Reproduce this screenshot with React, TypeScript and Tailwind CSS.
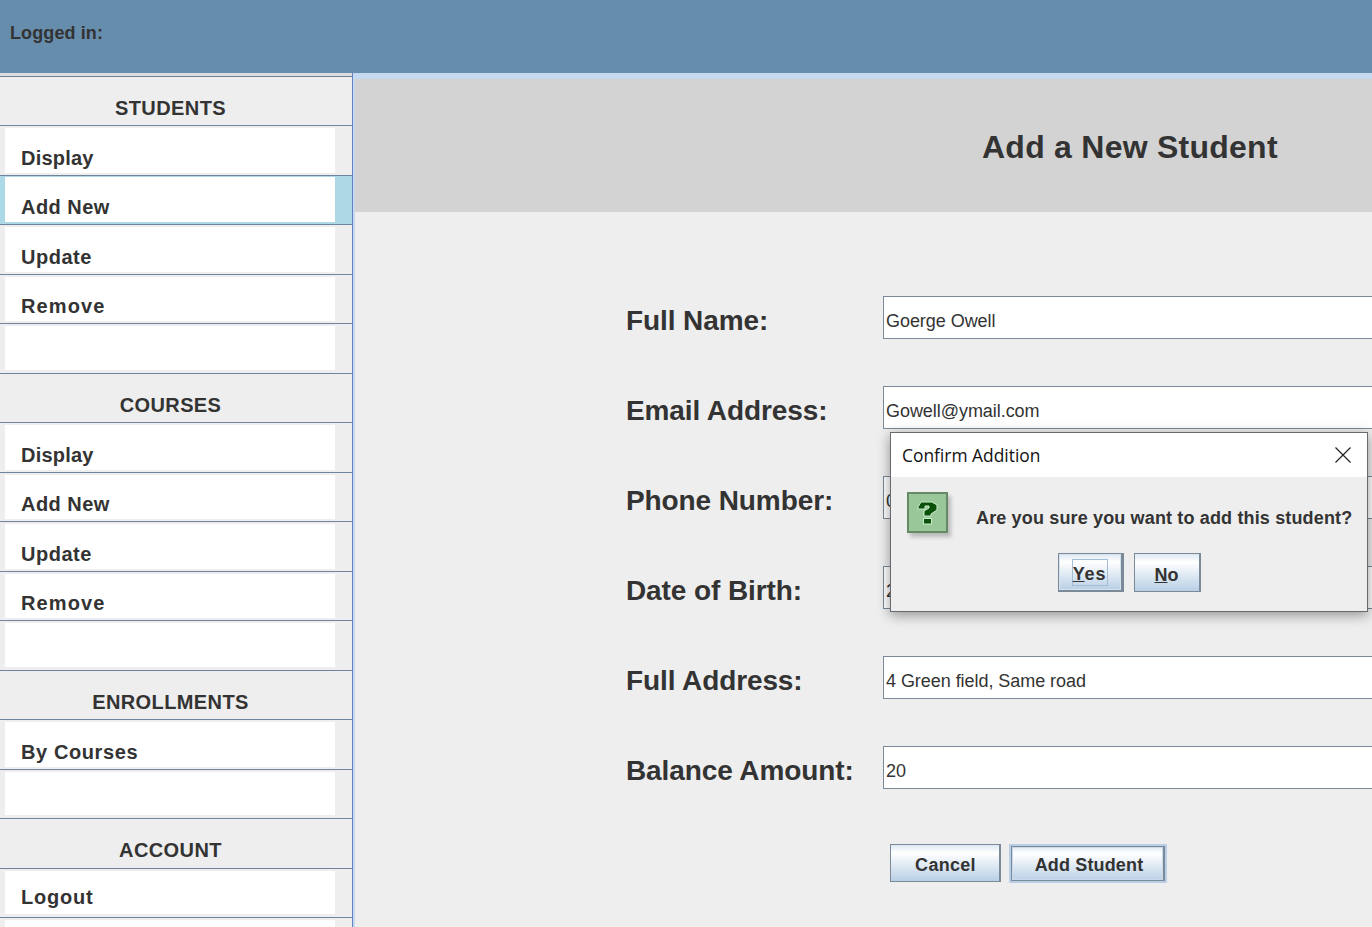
const sidebarRows = [
  { label: 'STUDENTS', kind: 'head', track: '' },
  { label: 'Display', kind: 'item', track: 'tracking-[0.2px]' },
  { label: 'Add New', kind: 'active', track: 'tracking-[0.45px]' },
  { label: 'Update', kind: 'item', track: 'tracking-[0.5px]' },
  { label: 'Remove', kind: 'item', track: 'tracking-[1.1px]' },
  { label: '', kind: 'item', track: '' },
  { label: 'COURSES', kind: 'head', track: '' },
  { label: 'Display', kind: 'item', track: 'tracking-[0.2px]' },
  { label: 'Add New', kind: 'item', track: 'tracking-[0.45px]' },
  { label: 'Update', kind: 'item', track: 'tracking-[0.5px]' },
  { label: 'Remove', kind: 'item', track: 'tracking-[1.1px]' },
  { label: '', kind: 'item', track: '' },
  { label: 'ENROLLMENTS', kind: 'head', track: '' },
  { label: 'By Courses', kind: 'item', track: 'tracking-[0.6px]' },
  { label: '', kind: 'item', track: '' },
  { label: 'ACCOUNT', kind: 'head', track: '' },
  { label: 'Logout', kind: 'logout', track: 'tracking-[0.8px]' },
  { label: '', kind: 'item', track: '' },
]

const fields = [
  { label: 'Full Name:', value: 'Goerge Owell' },
  { label: 'Email Address:', value: 'Gowell@ymail.com' },
  { label: 'Phone Number:', value: '0771234567' },
  { label: 'Date of Birth:', value: '2000-01-01' },
  { label: 'Full Address:', value: '4 Green field, Same road' },
  { label: 'Balance Amount:', value: '20' },
]

const metal = 'bg-[linear-gradient(180deg,#dde8f3_0%,#ffffff_22%,#b8cfe5_100%)]'

function SidebarRow({ label, kind, track, tall }: { label: string; kind: string; track: string; tall: boolean }) {
  const height = tall ? 'h-[50px]' : 'h-[49px]'

  if (kind === 'head') {
    return (
      <div className={`${height} shrink-0 border-b border-[#6f839b] flex items-center justify-center pt-[13px] pr-[11px] bg-[#eeeeee]`}>
        <span className="text-[20px] font-bold tracking-[0.4px]">{label}</span>
      </div>
    )
  }

  let offset = tall ? 'pt-[15px]' : 'pt-[14px]'
  if (kind === 'logout') offset = 'pt-[8px]'

  return (
    <div
      className={`${height} shrink-0 border-b border-[#6f839b] pl-[5px] pr-[17px] flex flex-col ${
        kind === 'active' ? 'bg-[#add8e6] pt-[1px] pb-[2px]' : 'bg-[#eeeeee] pt-[2px] pb-[3px]'
      }`}
    >
      <div className={`flex-1 bg-white pl-[16px] flex items-center ${offset}`}>
        <span className={`text-[20px] font-bold ${track}`}>{label}</span>
      </div>
    </div>
  )
}

function QuestionIcon() {
  return (
    <div className="w-[41px] h-[41px] shrink-0 bg-[#9ac79a] border-[2px] border-[#668a66] shadow-[3px_4px_4px_rgba(0,0,0,0.22)] flex items-center justify-center">
      <svg width="21" height="25" viewBox="0 0 21 25" fill="none">
        <path
          d="M1 7l3-5h11l5 3v5l-6 4v2H7v-5l5-3V6H8v3H1z"
          fill="#0a4f0a"
          stroke="#c9efc9"
          strokeWidth="1"
        />
        <rect x="6.5" y="18.5" width="8" height="5.5" fill="#0a4f0a" stroke="#c9efc9" strokeWidth="1" />
      </svg>
    </div>
  )
}

function ConfirmDialog() {
  return (
    <div className="absolute left-[535px] top-[353px] w-[478px] h-[180px] border border-[#666b70] bg-[#eeeeee] shadow-[0_3px_12px_rgba(0,0,0,0.4)] flex flex-col">
      <div className="h-[44px] bg-white flex items-center justify-between pl-[11px] pr-[15px]">
        <span className="text-[17.4px] text-[#111] font-['Open_Sans',sans-serif]">Confirm Addition</span>
        <svg width="18" height="18" viewBox="0 0 18 18" fill="none" stroke="#222" strokeWidth="1.2">
          <path d="M1.5 1.5l15 15M16.5 1.5l-15 15" />
        </svg>
      </div>
      <div className="flex pl-[16px] pt-[15px] gap-[28px]">
        <QuestionIcon />
        <span className="text-[18px] font-bold pt-[13px] whitespace-nowrap tracking-[0.15px]">
          Are you sure you want to add this student?
        </span>
      </div>
      <div className="flex justify-center gap-[10px] pt-[20px]">
        <button className={`w-[66px] h-[39px] border border-[#7a8a99] border-r-[3px] border-b-[2px] text-[18px] font-bold shadow-[inset_0_0_0_1px_#d5e2ef] flex items-center justify-center ${metal}`}>
          <span className="border border-[#a3bdd6] w-[36px] h-[27px] flex items-center justify-center pt-[5px] tracking-[0.9px]">
            <span><u>Y</u>es</span>
          </span>
        </button>
        <button className={`w-[67px] h-[39px] border border-[#7a8a99] border-r-[2px] text-[18px] font-bold flex items-center justify-center pt-[5px] ${metal}`}>
          <span><u>N</u>o</span>
        </button>
      </div>
    </div>
  )
}

export default function App() {
  return (
    <div className="h-screen overflow-hidden flex flex-col bg-[#eeeeee] text-[#333333] font-['Liberation_Sans',Arial,sans-serif]">
      {/* Top bar */}
      <header className="h-[73px] shrink-0 bg-[#678dad] flex items-center pl-[10px] pb-[7px]">
        <span className="text-[18px] font-bold tracking-[0.1px]">Logged in:</span>
      </header>

      <div className="flex-1 min-h-0 flex">
        {/* Sidebar */}
        <aside className="w-[353px] shrink-0 border-r border-[#6382bf] overflow-hidden flex flex-col">
          <div className="h-[4px] shrink-0 bg-[#dddddd] border-b border-[#6f839b]" />
          {sidebarRows.map((row, i) => (
            <SidebarRow key={i} label={row.label} kind={row.kind} track={row.track} tall={i % 2 === 1} />
          ))}
        </aside>

        {/* Main panel */}
        <main className="relative flex-1 min-w-0 overflow-hidden border-t-[6px] border-l-[2px] border-[#c5d9f1]">
          <div className="h-[133px] bg-[#d3d3d3] flex items-center pl-[627px] pt-[3px]">
            <h1 className="text-[32px] font-bold whitespace-nowrap tracking-[0.25px]">Add a New Student</h1>
          </div>

          <div className="pl-[271px] pt-[84px]">
            <div className="flex flex-col gap-[47px]">
              {fields.map((field) => (
                <div key={field.label} className="flex w-[900px] h-[43px]">
                  <label className="w-[257px] shrink-0 text-[28px] font-bold flex items-center pt-[7px] whitespace-nowrap tracking-[-0.1px]">
                    {field.label}
                  </label>
                  <div className="h-[43px] flex-1 bg-white border-t border-l border-b border-[#7a8a99] pl-[2px] pt-[8px] flex items-center text-[18px] tracking-[-0.05px]">
                    {field.value}
                  </div>
                </div>
              ))}
            </div>

            <div className="flex gap-[8px] ml-[264px] mt-[55px]">
              <button className={`w-[111px] h-[38px] border border-[#7a8a99] border-r-[2px] text-[18px] font-bold tracking-[0.3px] flex items-center justify-center pt-[4px] pl-[1px] ${metal}`}>
                Cancel
              </button>
              <button className={`w-[158px] h-[39px] border-[2px] border-[#b8cfe5] text-[18px] font-bold tracking-[0.15px] ${metal}`}>
                <span className="w-full h-full border border-[#7a8a99] border-r-[2px] flex items-center justify-center pt-[4px] pl-[3px] shadow-[inset_0_0_0_1px_#c9d9e9]">
                  Add Student
                </span>
              </button>
            </div>
          </div>

          <ConfirmDialog />
        </main>
      </div>
    </div>
  )
}
